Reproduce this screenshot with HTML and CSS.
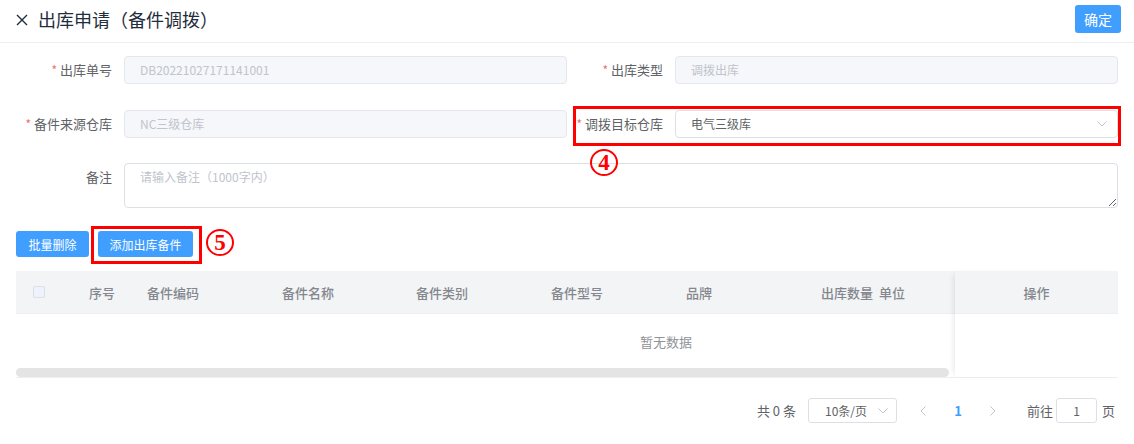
FILE: index.html
```html
<!DOCTYPE html>
<html lang="zh-CN">
<head>
<meta charset="utf-8">
<title>出库申请（备件调拨）</title>
<link rel="stylesheet" href="styles.css">
</head>
<body>
<div class="page">
  <header class="topbar">
    <div class="title">
      <svg class="close" width="12" height="12" viewBox="0 0 12 12"><path d="M1 1L11 11M11 1L1 11" stroke="#1f2d3d" stroke-width="1.4" fill="none"/></svg>
      <span>出库申请（备件调拨）</span>
    </div>
    <button class="btn btn-confirm">确定</button>
  </header>

  <section class="form">
    <div class="form-row">
      <div class="form-item">
        <label class="label"><i>*</i>出库单号</label>
        <div class="input disabled">DB20221027171141001</div>
      </div>
      <div class="form-item">
        <label class="label"><i>*</i>出库类型</label>
        <div class="input disabled">调拨出库</div>
      </div>
    </div>
    <div class="form-row row2">
      <div class="form-item">
        <label class="label"><i>*</i>备件来源仓库</label>
        <div class="input disabled">NC三级仓库</div>
      </div>
      <div class="form-item">
        <label class="label"><i>*</i>调拨目标仓库</label>
        <div class="input select">
          <span>电气三级库</span>
          <svg width="10" height="6" viewBox="0 0 10 6"><path d="M0.5 0.5L5 5L9.5 0.5" stroke="#c0c4cc" stroke-width="1" fill="none"/></svg>
        </div>
      </div>
    </div>
    <div class="form-row row3">
      <div class="form-item full">
        <label class="label">备注</label>
        <textarea class="textarea" placeholder="请输入备注（1000字内）"></textarea>
      </div>
    </div>
  </section>

  <div class="actions">
    <button class="btn btn-small w-del">批量删除</button>
    <button class="btn btn-small w-add">添加出库备件</button>
  </div>

  <div class="table">
    <div class="tmain">
      <div class="thead">
        <div class="th c-cb"><span class="checkbox"></span></div>
        <div class="th c-no">序号</div>
        <div class="th c-w">备件编码</div>
        <div class="th c-w2">备件名称</div>
        <div class="th c-w">备件类别</div>
        <div class="th c-w">备件型号</div>
        <div class="th c-w">品牌</div>
        <div class="th c-qty">出库数量</div>
        <div class="th c-unit">单位</div>
      </div>
      <div class="tbody"><span class="empty">暂无数据</span></div>
      <div class="scrollbar"><div class="thumb"></div></div>
    </div>
    <div class="tfixed">
      <div class="thead th-fixed">操作</div>
      <div class="tbody-fixed"></div>
    </div>
  </div>

  <div class="pager">
    <span class="total">共 0 条</span>
    <div class="psize">
      <span>10条/页</span>
      <svg width="10" height="6" viewBox="0 0 10 6"><path d="M0.5 0.5L5 5L9.5 0.5" stroke="#c0c4cc" stroke-width="1" fill="none"/></svg>
    </div>
    <span class="pbtn"><svg width="6" height="10" viewBox="0 0 6 10"><path d="M5.5 0.5L1 5L5.5 9.5" stroke="#c0c4cc" stroke-width="1" fill="none"/></svg></span>
    <span class="pnum">1</span>
    <span class="pbtn"><svg width="6" height="10" viewBox="0 0 6 10"><path d="M0.5 0.5L5 5L0.5 9.5" stroke="#c0c4cc" stroke-width="1" fill="none"/></svg></span>
    <span class="goto">前往</span>
    <div class="pinput">1</div>
    <span class="page-unit">页</span>
  </div>

  <div class="mark box4"></div>
  <div class="num num4">4</div>
  <div class="mark box5"></div>
  <div class="num num5">5</div>
</div>
</body>
</html>
```

FILE: styles.css
```css
* { box-sizing: border-box; }
html, body { margin: 0; padding: 0; background: #fff; }
body {
  font-family: "Noto Sans CJK SC", "Noto Sans", sans-serif;
  font-size: 13px;
  color: #606266;
  width: 1134px;
  height: 444px;
  overflow: hidden;
}
.page { position: relative; width: 1134px; height: 444px; }

.topbar {
  height: 43px;
  border-bottom: 1px solid #ebeef5;
  display: flex;
  align-items: flex-start;
  justify-content: space-between;
  padding: 0 13px 0 16px;
}
.title {
  display: flex;
  align-items: center;
  height: 38px;
  font-size: 18px;
  color: #1f2d3d;
}
.title .close { margin-right: 10px; margin-top: 1px; }
.btn {
  border: none;
  background: #409eff;
  color: #fff;
  font-family: inherit;
  border-radius: 3px;
  padding: 0;
  cursor: pointer;
}
.btn-confirm {
  margin-top: 5px;
  width: 46px;
  height: 28px;
  font-size: 14px;
}

.form { padding: 13px 16px 0 16px; }
.form-row { display: flex; }
.row2 { margin-top: 26px; }
.row3 { margin-top: 25px; }
.form-item { display: flex; width: 551px; align-items: flex-start; }
.form-item.full { width: 1102px; }
.label {
  width: 108px;
  flex: 0 0 108px;
  text-align: right;
  padding-right: 12px;
  line-height: 28px;
  font-size: 13px;
  color: #606266;
}
.label i { font-style: normal; color: #f56c6c; margin-right: 3px; font-size: 12px; }
.input {
  flex: 1;
  height: 28px;
  border: 1px solid #dcdfe6;
  border-radius: 4px;
  padding: 0 15px;
  font-size: 12px;
  line-height: 26px;
  color: #606266;
  background: #fff;
}
.input.disabled { background: #f5f7fa; border-color: #e4e7ed; color: #c0c4cc; }
.select { display: flex; align-items: center; justify-content: space-between; padding-right: 10px; }
.textarea {
  flex: 1;
  height: 45px;
  border: 1px solid #dcdfe6;
  border-radius: 4px;
  padding: 4px 15px;
  font-family: inherit;
  font-size: 12px;
  line-height: 18px;
  color: #606266;
  resize: vertical;
  outline: none;
}
.textarea::placeholder { color: #c0c4cc; }

.actions { display: flex; gap: 9px; padding: 23px 16px 0 16px; }
.btn-small { height: 26px; font-size: 12px; }
.w-del { width: 73px; }
.w-add { width: 95px; }

.table {
  display: flex;
  margin: 14px 16px 0 16px;
  border-bottom: 1px solid #ebeef5;
  height: 107px;
}
.tmain { width: 939px; flex: 0 0 939px; display: flex; flex-direction: column; }
.thead {
  height: 43px;
  background: #f3f4f6;
  border-bottom: 1px solid #ebeef5;
  display: flex;
  align-items: center;
}
.th { font-size: 13px; color: #84878d; white-space: nowrap; font-weight: 500; }
.c-cb { width: 73px; padding-left: 17px; display: flex; align-items: center; }
.checkbox {
  width: 12px; height: 12px;
  border: 1px solid #dcdfe6;
  border-radius: 2px;
  background: #edf2fc;
  display: block;
}
.c-no { width: 58px; }
.c-w { width: 135px; }
.c-w2 { width: 134px; }
.c-qty { width: 58px; }
.c-unit { width: 75px; }
.tbody {
  height: 54px;
  display: flex;
  align-items: center;
  padding-left: 624px;
}
.empty { font-size: 13px; color: #909399; }
.scrollbar { height: 9px; }
.thumb { height: 9px; background: #e4e4e4; border-radius: 5px; width: 933px; }

.tfixed {
  flex: 1;
  position: relative;
  box-shadow: -4px 0 6px -3px rgba(0,0,0,0.10);
  display: flex;
  flex-direction: column;
  background: #fff;
}
.th-fixed { justify-content: center; font-size: 13px; color: #84878d; font-weight: 500; }
.tbody-fixed { flex: 1; }

.pager {
  display: flex;
  align-items: center;
  justify-content: flex-end;
  padding: 20px 19px 0 0;
  font-size: 13px;
  color: #606266;
}
.total { margin-right: 12px; }
.psize {
  width: 89px;
  height: 25px;
  border: 1px solid #dcdfe6;
  border-radius: 3px;
  display: flex;
  align-items: center;
  justify-content: space-between;
  padding: 0 8px 0 16px;
  font-size: 12px;
  margin-right: 11px;
}
.pbtn { width: 30px; height: 25px; display: flex; align-items: center; justify-content: center; }
.pnum { width: 40px; text-align: center; color: #409eff; font-weight: bold; font-size: 13px; }
.goto { margin-left: 19px; margin-right: 3px; }
.pinput {
  width: 41px;
  height: 25px;
  border: 1px solid #dcdfe6;
  border-radius: 3px;
  text-align: center;
  line-height: 23px;
  font-size: 12px;
  margin-right: 5px;
}

.mark { position: absolute; border: 3px solid #ff0000; }
.box4 { left: 573px; top: 106px; width: 548px; height: 40px; }
.box5 { left: 91px; top: 226px; width: 111px; height: 38px; }
.num {
  position: absolute;
  width: 28px;
  height: 27px;
  border: 2px solid #ff0000;
  border-radius: 50%;
  color: #ff0000;
  font-family: "Liberation Serif", serif;
  font-weight: bold;
  font-size: 23px;
  line-height: 23px;
  text-align: center;
}
.num4 { left: 590px; top: 149px; }
.num5 { left: 206px; top: 229px; }
```
